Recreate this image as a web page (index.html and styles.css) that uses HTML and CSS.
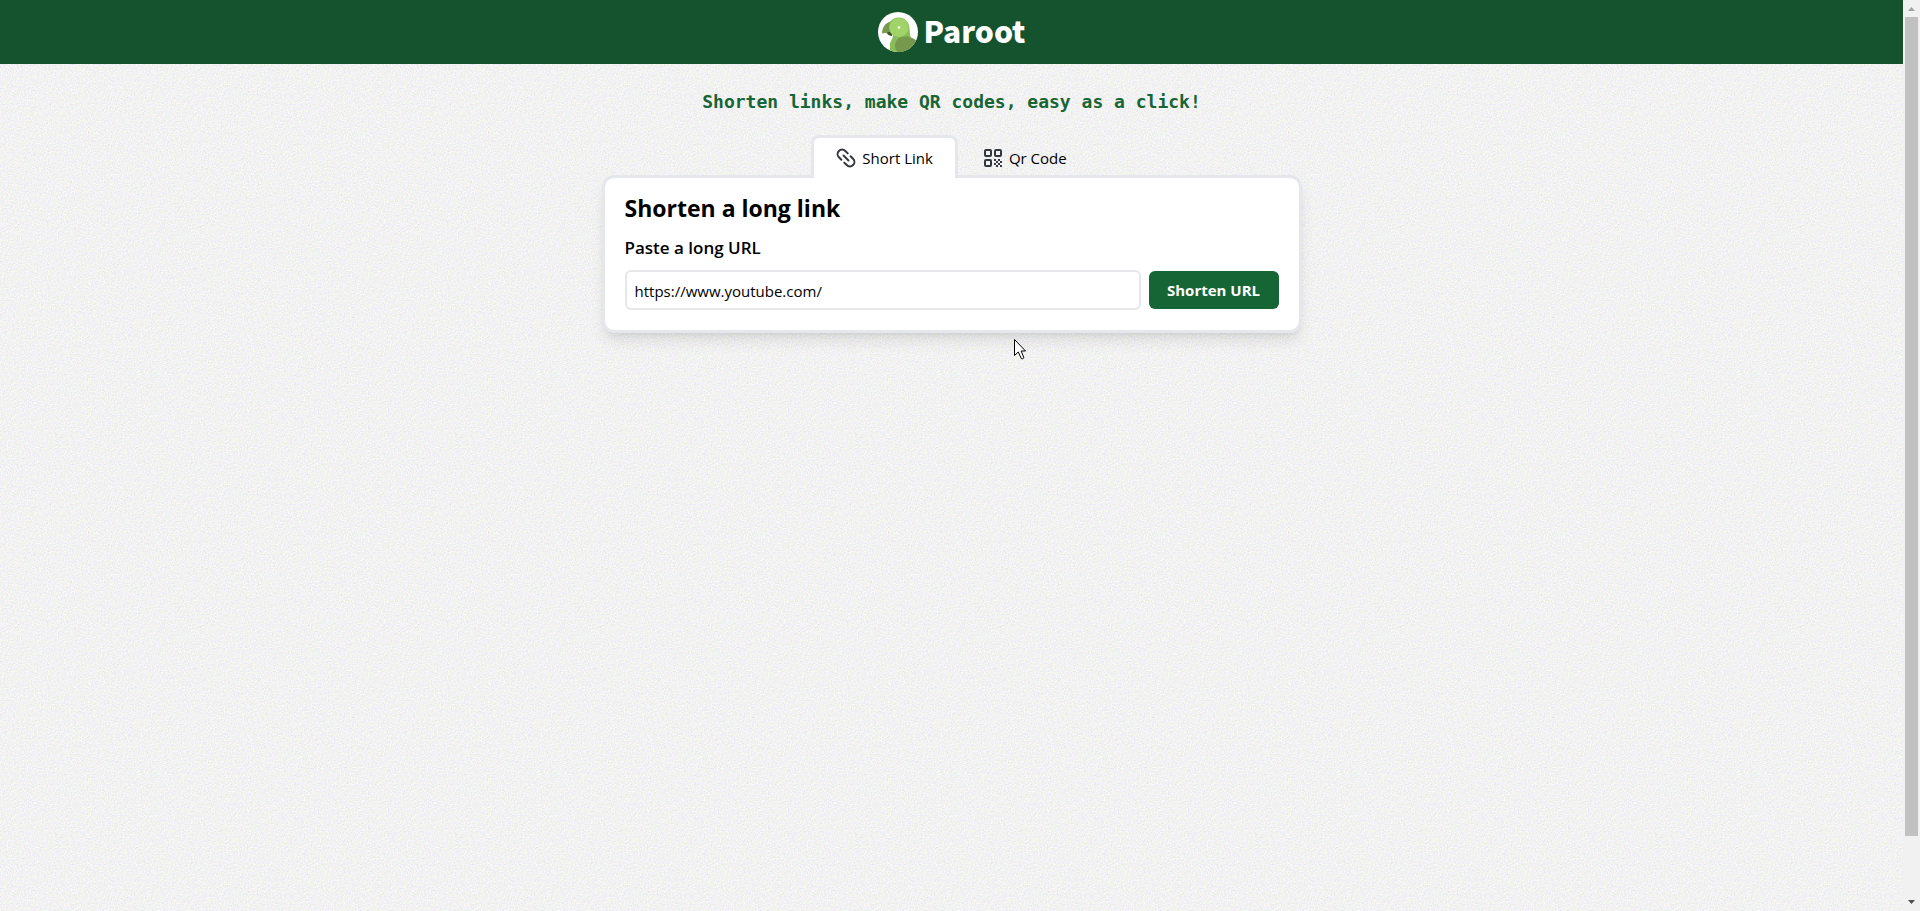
FILE: index.html
```html
<!DOCTYPE html>
<html lang="en">
<head>
<meta charset="utf-8">
<meta name="viewport" content="width=device-width, initial-scale=1">
<title>Paroot</title>
<link rel="stylesheet" href="styles.css">
</head>
<body>
<div class="page">
  <header class="header">
    <a class="brand" href="#">
      <svg class="brand-logo" viewBox="0 0 40 40" aria-hidden="true">
        <defs><clipPath id="disc"><circle cx="20" cy="20" r="20"/></clipPath></defs>
        <circle cx="20" cy="20" r="20" fill="#fff"/>
        <g clip-path="url(#disc)">
          <path d="M16 9C9 9 4 14 4 21.500L13 20Z" fill="#77994e"/>
          <path d="M8.500 20.500L14 19.500V24C11.500 24 9.500 22.700 8.500 20.500Z" fill="#3f4f2b"/>
          <path d="M11 15C11 9 15 5.500 20.500 5.500C27 5.500 31.500 10 31.500 17C31.500 26 36 29 36 41H12V33C12 29 15 27 15 23.500C12.500 22 11 19 11 15Z" fill="#88bd58"/>
          <circle cx="21" cy="15.500" r="9.500" fill="#a0d468"/>
          <circle cx="21" cy="15.500" r="1.300" fill="#fff"/>
          <path d="M17 34C17 28 21 24.500 27 24.500C33 24.500 36.500 27 39 29V42H22C19 40 17 37.500 17 34Z" fill="#77994e"/>
        </g>
      </svg>
      <span class="brand-name">Paroot</span>
    </a>
  </header>
  <main class="main">
    <p class="tagline">Shorten links, make QR codes, easy as a click!</p>
    <div class="tabs" role="tablist">
      <button class="tab tab-active" type="button" role="tab" aria-selected="true">
        <svg class="tab-icon" viewBox="0 0 20 20" fill="none" stroke="#34373b" stroke-width="2" stroke-linecap="round" stroke-linejoin="round" aria-hidden="true">
          <g transform="rotate(45 10 10)">
            <path d="M8 5.500H4.500A4.500 4.500 0 0 0 4.500 14.500H8"/>
            <path d="M12 5.500H15.500A4.500 4.500 0 0 1 15.500 14.500H12"/>
            <path d="M6.500 10H13.500"/>
          </g>
        </svg>
        <span>Short Link</span>
      </button>
      <button class="tab" type="button" role="tab" aria-selected="false">
        <svg class="tab-icon" viewBox="0 0 20 20" fill="none" stroke="#34373b" stroke-width="2" aria-hidden="true">
          <rect x="2" y="2" width="6" height="6" rx="1"/>
          <rect x="12" y="2" width="6" height="6" rx="1"/>
          <rect x="2" y="12" width="6" height="6" rx="1"/>
          <path fill="#34373b" stroke="none" d="M11 11h2v2h-2zM15 11h2v2h-2zM13 13h2v2h-2zM17 13h2v2h-2zM11 15h2v2h-2zM15 15h2v2h-2zM13 17h2v2h-2zM17 17h2v2h-2z"/>
        </svg>
        <span>Qr Code</span>
      </button>
    </div>
    <section class="card">
      <h1 class="card-title">Shorten a long link</h1>
      <form class="form">
        <label class="form-label" for="url">Paste a long URL</label>
        <div class="form-row">
          <input class="form-input" id="url" type="text" value="https://www.youtube.com/">
          <button class="form-button" type="button">Shorten URL</button>
        </div>
      </form>
    </section>
  </main>
</div>
<div class="scrollbar" aria-hidden="true">
  <svg class="scroll-arrow" viewBox="0 0 17 17"><path d="M5 11h7L8.500 7z" fill="#a3a3a3"/></svg>
  <div class="scroll-track"><div class="scroll-thumb"></div></div>
  <svg class="scroll-arrow" viewBox="0 0 17 17"><path d="M5 6h7L8.500 10z" fill="#505050"/></svg>
</div>
<svg class="pointer" viewBox="0 0 12 21" aria-hidden="true">
  <path d="M.5.500V16.500L4.300 13L7.300 19.500Q8.500 20.500 9.900 18.800L7.200 12H11.500Z" fill="#fff" stroke="#000"/>
</svg>
</body>
</html>
```
FILE: styles.css
```css
* {
  box-sizing: border-box;
}

body {
  margin: 0;
  min-height: 100vh;
  display: flex;
  color: #000;
  font-family: "Open Sans", sans-serif;
  font-size: 15px;
  line-height: 24px;
}

button,
input {
  font: inherit;
  color: inherit;
}

.page {
  flex: 1;
  min-width: 0;
  background-color: #f1f1f1;
  background-image: url("data:image/svg+xml,%3Csvg xmlns='http://www.w3.org/2000/svg' width='400' height='400'%3E%3Cfilter id='n' x='0' y='0' width='100%25' height='100%25' color-interpolation-filters='sRGB'%3E%3CfeTurbulence type='fractalNoise' baseFrequency='.7' numOctaves='2' stitchTiles='stitch'/%3E%3CfeColorMatrix values='.13 .06 0 0 .853 .06 .13 0 0 .853 .06 0 .13 0 .853 0 0 0 0 1'/%3E%3C/filter%3E%3Crect width='400' height='400' filter='url(%23n)'/%3E%3C/svg%3E");
}

.header {
  display: flex;
  justify-content: center;
  align-items: center;
  height: 64px;
  background: #14532d;
}

.brand {
  display: flex;
  align-items: center;
  gap: 6px;
  color: #fff;
  text-decoration: none;
}

.brand-logo {
  width: 40px;
  height: 40px;
}

.brand-name {
  padding-bottom: 4px;
  font-family: "Noto Sans CJK JP", sans-serif;
  font-size: 30px;
  font-weight: 900;
  line-height: 40px;
}

.main {
  display: flex;
  flex-direction: column;
  align-items: center;
  padding: 24px 16px;
}

.tagline {
  margin: 0 0 19px;
  color: #166534;
  font-family: "DejaVu Sans Mono", monospace;
  font-size: 18px;
  font-weight: 700;
  line-height: 28px;
}

.tabs {
  display: flex;
  position: relative;
  z-index: 1;
  margin-bottom: -3px;
}

.tab {
  display: flex;
  align-items: center;
  gap: 6px;
  height: 43px;
  padding: 0 22px;
  border: 3px solid transparent;
  border-bottom: 0;
  background: none;
}

.tab-active {
  border-color: #e5e7eb;
  border-radius: 8px 8px 0 0;
  background: #fff;
}

.tab-icon {
  width: 20px;
  height: 20px;
}

.card {
  width: 100%;
  max-width: 700px;
  padding: 16px 20px 20px;
  border: 3px solid #e5e7eb;
  border-radius: 12px;
  background: #fff;
  box-shadow: 0 10px 15px -3px rgb(0 0 0 / 10%), 0 4px 6px -4px rgb(0 0 0 / 10%);
}

.card-title {
  margin: 0 0 12px;
  font-size: 23px;
  font-weight: 700;
  line-height: 28px;
}

.form {
  display: flex;
  flex-direction: column;
  gap: 8px;
}

.form-label {
  font-size: 17px;
  font-weight: 600;
  line-height: 28px;
}

.form-row {
  display: flex;
  align-items: center;
  gap: 8px;
}

.form-input {
  flex: 1;
  min-width: 0;
  height: 40px;
  padding: 2px 8px 0;
  border: 2px solid #e5e7eb;
  border-radius: 6px;
  background: #fff;
}

.form-button {
  width: 130px;
  height: 38px;
  padding: 0;
  border: 0;
  border-radius: 6px;
  background: #166534;
  color: #fff;
  font-weight: 700;
}

.scrollbar {
  display: flex;
  flex-direction: column;
  width: 17px;
  background: #f1f1f1;
}

.scroll-arrow {
  width: 17px;
  height: 17px;
}

.scroll-track {
  flex: 1;
  display: grid;
  padding: 0 2px;
}

.scroll-thumb {
  height: 93.4%;
  background: #c1c1c1;
}

.pointer {
  position: absolute;
  left: 1014px;
  top: 339px;
  width: 12px;
  height: 21px;
}
```
